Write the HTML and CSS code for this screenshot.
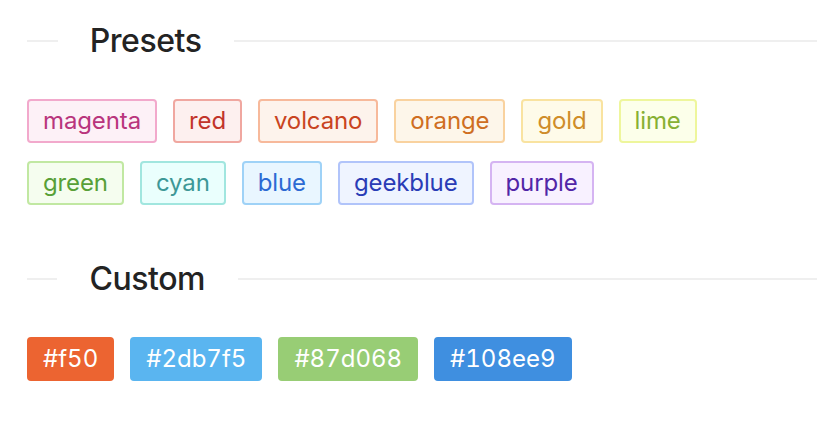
FILE: index.html
```html
<!DOCTYPE html>
<html>
<head>
<meta charset="utf-8">
<link rel="stylesheet" href="styles.css">
</head>
<body>
<div class="page">
  <div class="divider first">
    <span class="line before"></span>
    <span class="divider-text">Presets</span>
    <span class="line after"></span>
  </div>
  <div class="tags presets">
    <span class="tag magenta">magenta</span>
    <span class="tag red">red</span>
    <span class="tag volcano">volcano</span>
    <span class="tag orange">orange</span>
    <span class="tag gold">gold</span>
    <span class="tag lime">lime</span>
    <span class="tag green">green</span>
    <span class="tag cyan">cyan</span>
    <span class="tag blue">blue</span>
    <span class="tag geekblue">geekblue</span>
    <span class="tag purple">purple</span>
  </div>
  <div class="divider second">
    <span class="line before"></span>
    <span class="divider-text">Custom</span>
    <span class="line after"></span>
  </div>
  <div class="tags">
    <span class="tag solid c-f50">#f50</span>
    <span class="tag solid c-2db7f5">#2db7f5</span>
    <span class="tag solid c-87d068">#87d068</span>
    <span class="tag solid c-108ee9">#108ee9</span>
  </div>
</div>
</body>
</html>
```

FILE: styles.css
```css
html, body {
  margin: 0;
  padding: 0;
  background: #ffffff;
}
body {
  font-family: Inter, "Noto Sans", "Liberation Sans", sans-serif;
  color: #262626;
}
.page {
  width: 790px;
  padding: 16px 0 0 27px;
}
.divider {
  display: flex;
  align-items: center;
  height: 50px;
}
.divider.second {
  margin-top: 49px;
}
.line {
  height: 2px;
  background: #efefef;
  flex-basis: 0;
}
.line.before { flex-grow: 5; }
.line.after { flex-grow: 95; }
.divider-text {
  font-size: 32px;
  font-weight: 500;
  line-height: 50px;
  letter-spacing: -0.45px;
  padding: 0 33px 0 32px;
  color: #232323;
  white-space: nowrap;
}
.tags {
  display: flex;
  flex-wrap: wrap;
  column-gap: 16px;
  row-gap: 18px;
  margin-top: 33px;
}
.tags.presets {
  max-width: 740px;
}
.tag {
  display: inline-block;
  box-sizing: border-box;
  height: 44px;
  line-height: 40px;
  padding: 0 14px;
  border: 2px solid;
  border-radius: 4px;
  font-size: 24px;
  letter-spacing: -0.12px;
}
.magenta { color: #b9357d; background: #fdf1f7; border-color: #f2a9cc; }
.red { color: #c2342a; background: #fdf0ef; border-color: #f0a7a0; }
.volcano { color: #c9441f; background: #fdf3ec; border-color: #f7b99b; }
.orange { color: #cf6e22; background: #fdf6ea; border-color: #f9d29f; }
.gold { color: #cf8d2a; background: #fefbe9; border-color: #f9e3a0; }
.lime { color: #87b033; background: #fcffea; border-color: #eef69c; }
.green { color: #58a038; background: #f5fdef; border-color: #c1e8a2; }
.cyan { color: #3d9897; background: #eafffd; border-color: #a1e6df; }
.blue { color: #2c6ad3; background: #e9f6ff; border-color: #9fd2f7; }
.geekblue { color: #2a3cb6; background: #eff4ff; border-color: #b1c4fa; }
.purple { color: #5126a7; background: #f8f1ff; border-color: #d5b4f2; }
.solid {
  color: #ffffff;
  font-feature-settings: "tnum";
  letter-spacing: 0;
}
.c-f50 { background: #ec6431; border-color: #ec6431; }
.c-2db7f5 { background: #5ab5f0; border-color: #5ab5f0; }
.c-87d068 { background: #98cd75; border-color: #98cd75; }
.c-108ee9 { background: #3f8fe0; border-color: #3f8fe0; }
```
